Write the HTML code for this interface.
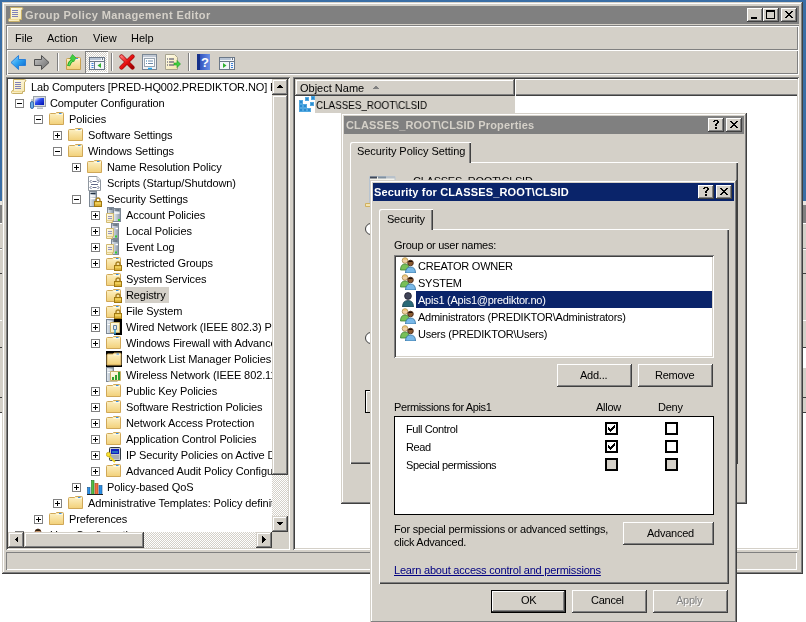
<!DOCTYPE html><html><head><meta charset="utf-8"><style>
html,body{margin:0;padding:0;width:806px;height:622px;overflow:hidden;background:#fff;}
body{position:relative;font-family:"Liberation Sans",sans-serif;font-size:11px;color:#000;}
div,svg{position:absolute;}
.t,.m,.d,.b{will-change:transform;}
.t{line-height:13px;white-space:nowrap;letter-spacing:-0.1px;}
.m{line-height:13px;white-space:nowrap;}
.d{line-height:13px;white-space:nowrap;font-size:11px;letter-spacing:-0.25px;}
.b{line-height:13px;white-space:nowrap;font-weight:bold;}
.dith{background-color:#e9e7e3;background-image:repeating-conic-gradient(#fff 0 25%, #d4d0c8 0 50%);background-size:2px 2px;}
</style></head><body>
<svg width="0" height="0" style="left:0;top:0"><defs>
<linearGradient id="gfold" x1="0" y1="0" x2="0" y2="1"><stop offset="0" stop-color="#fdf2c8"/><stop offset="1" stop-color="#f2d078"/></linearGradient>
<linearGradient id="glock" x1="0" y1="0" x2="0" y2="1"><stop offset="0" stop-color="#f8d860"/><stop offset="1" stop-color="#c08810"/></linearGradient>
<linearGradient id="gback" x1="0" y1="0" x2="1" y2="1"><stop offset="0" stop-color="#9ad8ff"/><stop offset="0.5" stop-color="#2aa0f0"/><stop offset="1" stop-color="#0a60c8"/></linearGradient>
<linearGradient id="gfwd" x1="0" y1="0" x2="1" y2="1"><stop offset="0" stop-color="#c8c8c8"/><stop offset="1" stop-color="#6a6a6a"/></linearGradient>
<linearGradient id="gscr" x1="0" y1="0" x2="1" y2="1"><stop offset="0" stop-color="#ffffff"/><stop offset="0.4" stop-color="#3050f0"/><stop offset="1" stop-color="#0010b0"/></linearGradient>
<linearGradient id="gsrv" x1="0" y1="0" x2="1" y2="0"><stop offset="0" stop-color="#e8eef4"/><stop offset="1" stop-color="#8a98a8"/></linearGradient>
<linearGradient id="gred" x1="0" y1="0" x2="1" y2="1"><stop offset="0" stop-color="#ff7070"/><stop offset="0.5" stop-color="#e81010"/><stop offset="1" stop-color="#a00000"/></linearGradient>
<linearGradient id="ghelp" x1="0" y1="0" x2="1" y2="0"><stop offset="0" stop-color="#2040b0"/><stop offset="1" stop-color="#6a90e8"/></linearGradient>
<linearGradient id="gpap" x1="0" y1="0" x2="1" y2="1"><stop offset="0" stop-color="#fffdf0"/><stop offset="1" stop-color="#f4e4a8"/></linearGradient>
</defs></svg>
<div style="left:0px;top:0px;width:806px;height:201px;background:#3a6ea5"></div>
<div style="left:0px;top:201px;width:806px;height:4px;background:#e8e6e0"></div>
<div style="left:0px;top:205px;width:806px;height:18px;background:#808080"></div>
<div style="left:0px;top:223px;width:806px;height:190px;background:#d4d0c8"></div>
<div style="left:0px;top:223px;width:806px;height:1px;background:#fff"></div>
<div style="left:0px;top:248px;width:806px;height:1px;background:#808080"></div>
<div style="left:0px;top:249px;width:806px;height:1px;background:#fff"></div>
<div style="left:0px;top:273px;width:806px;height:1px;background:#404040"></div>
<div style="left:0px;top:320px;width:806px;height:1px;background:#fff"></div>
<div style="left:0px;top:347px;width:806px;height:1px;background:#404040"></div>
<div style="left:0px;top:397px;width:806px;height:1px;background:#404040"></div>
<div style="left:0px;top:412px;width:806px;height:1px;background:#404040"></div>
<div style="left:790px;top:348px;width:16px;height:20px;background:#fff"></div>
<div style="left:2px;top:2px;width:801px;height:572px;background:#d4d0c8;box-shadow:inset -1px -1px #404040,inset 1px 1px #d4d0c8,inset -2px -2px #808080,inset 2px 2px #ffffff;"></div>
<div style="left:6px;top:6px;width:793px;height:18px;background:#808080"></div>
<svg style="left:8px;top:7px;" width="16" height="16" viewBox="0 0 16 16"><path d="M2.5 0.5H13.5Q15 0.5 15 2Q14 2.5 13.5 3V12.5H11.5V14.5H1.5Q0.5 14.5 0.5 13.5V12.5Q0.5 11.5 2.5 11.5Z" fill="url(#gpap)" stroke="#c8b068"/><path d="M4 3.5h6M4 5.5h6M4 7.5h6M4 9.5h6" stroke="#8080b8"/><path d="M1 12.5H10.5" stroke="#f0d890"/></svg>
<div class="b" style="left:25px;top:9px;color:#d4d0c8;letter-spacing:0.4px">Group Policy Management Editor</div>
<div style="left:747px;top:8px;width:16px;height:14px;background:#d4d0c8;box-shadow:inset -1px -1px #404040,inset 1px 1px #ffffff,inset -2px -2px #808080;"></div>
<div style="left:751px;top:17px;width:6px;height:2px;background:#000"></div>
<div style="left:763px;top:8px;width:16px;height:14px;background:#d4d0c8;box-shadow:inset -1px -1px #404040,inset 1px 1px #ffffff,inset -2px -2px #808080;"></div>
<div style="left:766px;top:10px;width:9px;height:9px;border:1px solid #000;border-top-width:2px;box-sizing:border-box"></div>
<div style="left:781px;top:8px;width:16px;height:14px;background:#d4d0c8;box-shadow:inset -1px -1px #404040,inset 1px 1px #ffffff,inset -2px -2px #808080;"></div>
<svg style="left:785px;top:11px;" width="8" height="7" viewBox="0 0 8 7" shape-rendering="crispEdges"><path d="M0 0h1v1h-1zM1 0h1v1h-1zM6 0h1v1h-1zM7 0h1v1h-1zM1 1h1v1h-1zM2 1h1v1h-1zM5 1h1v1h-1zM6 1h1v1h-1zM2 2h1v1h-1zM3 2h1v1h-1zM4 2h1v1h-1zM5 2h1v1h-1zM3 3h1v1h-1zM4 3h1v1h-1zM2 4h1v1h-1zM3 4h1v1h-1zM4 4h1v1h-1zM5 4h1v1h-1zM1 5h1v1h-1zM2 5h1v1h-1zM5 5h1v1h-1zM6 5h1v1h-1zM0 6h1v1h-1zM1 6h1v1h-1zM6 6h1v1h-1zM7 6h1v1h-1z" fill="#000"/></svg>
<div style="left:6px;top:25px;width:793px;height:50px;box-shadow:inset 1px 1px #808080,inset -1px -1px #fff,inset 2px 2px #fff,inset -2px -2px #808080"></div>
<div style="left:7px;top:49px;width:791px;height:1px;background:#808080"></div>
<div style="left:7px;top:50px;width:791px;height:1px;background:#fff"></div>
<div class="m" style="left:15px;top:32px;">File</div>
<div class="m" style="left:47px;top:32px;">Action</div>
<div class="m" style="left:93px;top:32px;">View</div>
<div class="m" style="left:131px;top:32px;">Help</div>
<svg style="left:10px;top:55px;" width="17" height="15" viewBox="0 0 17 15"><path d="M1 7.5L8.5 0.5V4.5H15.5V10.5H8.5V14.5Z" fill="url(#gback)" stroke="#2a80d8" stroke-linejoin="round"/></svg>
<svg style="left:33px;top:55px;" width="17" height="15" viewBox="0 0 17 15"><path d="M16 7.5L8.5 0.5V4.5H1.5V10.5H8.5V14.5Z" fill="url(#gfwd)" stroke="#505050" stroke-linejoin="round"/></svg>
<div style="left:57px;top:53px;width:1px;height:18px;background:#808080"></div>
<div style="left:58px;top:53px;width:1px;height:18px;background:#fff"></div>
<svg style="left:66px;top:54px;" width="15" height="16" viewBox="0 0 15 16"><path d="M0.5 15.5V5.5Q0.5 4.5 1.5 4.5H6.5L7.5 3.5H13.5Q14.5 3.5 14.5 4.5V15.5Z" fill="url(#gfold)" stroke="#c8a050"/><path d="M7.5 5.5H14" stroke="#fff6d0"/><path d="M10 4.5h2" stroke="#3a90e8"/><path d="M2.5 12Q3.5 8 6.5 6" fill="none" stroke="#20a020" stroke-width="3"/><path d="M2.8 11.5Q3.8 8 6.5 6.2" fill="none" stroke="#60e060" stroke-width="1.4"/><path d="M4 4.5L6.5 0.5L10 4L7.5 8Z" fill="#40d040" stroke="#20a020" stroke-width="0.6"/></svg>
<div style="left:85px;top:51px;width:23px;height:22px;box-shadow:inset 1px 1px #808080,inset -1px -1px #fff"></div>
<div style="left:86px;top:52px;width:21px;height:20px;"></div>

<div class="dith" style="left:86px;top:52px;width:21px;height:20px;background-position:1px 0"></div>
<svg style="left:89px;top:57px;" width="16" height="13" viewBox="0 0 16 13"><rect x="0.5" y="0.5" width="15" height="12" fill="#f4f6fa" stroke="#6b7888"/><path d="M1 2h11" stroke="#b8c4d4" stroke-width="2"/><path d="M13 2h1" stroke="#6b7888" stroke-width="2"/><path d="M1 4.5h14" stroke="#6b7888"/><path d="M5.5 4.5v8" stroke="#6b7888"/><path d="M2.5 6.5h2M2.5 8.5h2M2.5 10.5h2" stroke="#3a80d8"/><path d="M12 6v5l-3.5-2.5z" fill="#30b030"/></svg>
<div style="left:111px;top:53px;width:1px;height:18px;background:#808080"></div>
<div style="left:112px;top:53px;width:1px;height:18px;background:#fff"></div>
<svg style="left:119px;top:54px;" width="16" height="16" viewBox="0 0 16 16"><path d="M2.5 2.5L13.5 13.5M13.5 2.5L2.5 13.5" stroke="#a00808" stroke-width="4.2" stroke-linecap="round"/><path d="M2.5 2.5L13.5 13.5M13.5 2.5L2.5 13.5" stroke="url(#gred)" stroke-width="3" stroke-linecap="round"/></svg>
<svg style="left:142px;top:54px;" width="15" height="16" viewBox="0 0 15 16"><rect x="0.5" y="0.5" width="14" height="15" fill="#f0f2f6" stroke="#7b8794"/><path d="M1 2h13" stroke="#c0c8d4" stroke-width="2"/><rect x="2.5" y="4.5" width="10" height="8" fill="#fff" stroke="#98a4b0"/><path d="M4 7h1M6 7h5M4 9.5h1M6 9.5h5" stroke="#6a88a8"/><path d="M4.5 7h0.5" stroke="#20a0e0"/><path d="M6 14.5h4" stroke="#20a8f0" stroke-width="1.5"/></svg>
<svg style="left:165px;top:54px;" width="16" height="16" viewBox="0 0 16 16"><path d="M0.5 0.5H9.5L12.5 3.5V15.5H0.5Z" fill="url(#gpap)" stroke="#a8a490"/><path d="M2 5h1M4 5h5M2 8h1M4 8h5M2 11h1M4 11h5" stroke="#3a3a60"/><path d="M9 9h3V6.5L15.5 10L12 13.5V11H9Z" fill="#40d040" stroke="#20a020" stroke-width="0.6"/></svg>
<div style="left:188px;top:53px;width:1px;height:18px;background:#808080"></div>
<div style="left:189px;top:53px;width:1px;height:18px;background:#fff"></div>
<svg style="left:197px;top:54px;" width="13" height="16" viewBox="0 0 13 16"><rect x="0" y="0" width="13" height="16" fill="url(#ghelp)"/><rect x="0" y="0" width="3" height="16" fill="#16308a"/><text x="8" y="13" font-family="Liberation Sans" font-weight="bold" font-size="13" fill="#fff" text-anchor="middle">?</text></svg>
<svg style="left:219px;top:57px;" width="16" height="13" viewBox="0 0 16 13"><rect x="0.5" y="0.5" width="15" height="12" fill="#f4f6fa" stroke="#6b7888"/><path d="M1 2h11" stroke="#b8c4d4" stroke-width="2"/><path d="M13 2h1" stroke="#6b7888" stroke-width="2"/><path d="M1 4.5h14" stroke="#6b7888"/><path d="M10.5 4.5v8" stroke="#6b7888"/><path d="M12 6.5h2M12 8.5h2M12 10.5h2" stroke="#3a80d8"/><path d="M4 6v5l3.5-2.5z" fill="#30b030"/></svg>
<div style="left:6px;top:77px;width:284px;height:473px;background:#fff;box-shadow:inset 1px 1px #808080,inset -1px -1px #ffffff,inset 2px 2px #404040,inset -2px -2px #d4d0c8;"></div>
<div style="left:293px;top:77px;width:506px;height:473px;background:#fff;box-shadow:inset 1px 1px #808080,inset -1px -1px #ffffff,inset 2px 2px #404040,inset -2px -2px #d4d0c8;"></div>
<div style="left:6px;top:552px;width:791px;height:18px;box-shadow:inset 1px 1px #808080,inset -1px -1px #fff"></div>
<div style="left:8px;top:79px;width:264px;height:453px;overflow:hidden;background:#fff">
<svg style="left:3px;top:0px;" width="16" height="16" viewBox="0 0 16 16"><path d="M2.5 0.5H13.5Q15 0.5 15 2Q14 2.5 13.5 3V12.5H11.5V14.5H1.5Q0.5 14.5 0.5 13.5V12.5Q0.5 11.5 2.5 11.5Z" fill="url(#gpap)" stroke="#c8b068"/><path d="M4 3.5h6M4 5.5h6M4 7.5h6M4 9.5h6" stroke="#8080b8"/><path d="M1 12.5H10.5" stroke="#f0d890"/></svg>
<div class="t" style="left:23px;top:2px;">Lab Computers [PRED-HQ002.PREDIKTOR.NO] Policy</div>
<div style="left:7px;top:20px;width:9px;height:9px;border:1px solid #808080;box-sizing:border-box;background:#fff"></div>
<div style="left:9px;top:24px;width:5px;height:1px;background:#000"></div>
<svg style="left:22px;top:16px;" width="16" height="16" viewBox="0 0 16 16"><rect x="3.5" y="1.5" width="12" height="10" fill="#d8dde2" stroke="#9aa2aa"/><rect x="5" y="3" width="9" height="7" fill="url(#gscr)"/><path d="M7 12.5h6v1.5h-6z" fill="#b8bec4"/><rect x="0.5" y="6.5" width="3" height="7" rx="1.5" fill="#6aaee8" stroke="#3a6aa8"/><path d="M2 6V4" stroke="#8a9aa0"/></svg>
<div class="t" style="left:42px;top:18px;">Computer Configuration</div>
<div style="left:26px;top:36px;width:9px;height:9px;border:1px solid #808080;box-sizing:border-box;background:#fff"></div>
<div style="left:28px;top:40px;width:5px;height:1px;background:#000"></div>
<svg style="left:41px;top:32px;" width="16" height="16" viewBox="0 0 16 16"><g transform="translate(0,0)"><path d="M0.5 13.5V3.5Q0.5 2.5 1.5 2.5H6.5L7.5 1.5H13.5Q14.5 1.5 14.5 2.5V13.5Z" fill="url(#gfold)" stroke="#d0a858"/><path d="M7.5 3.5H14" stroke="#fff8dc"/><path d="M10 2.5h2.5" stroke="#3a90e8"/></g></svg>
<div class="t" style="left:61px;top:34px;">Policies</div>
<div style="left:45px;top:52px;width:9px;height:9px;border:1px solid #808080;box-sizing:border-box;background:#fff"></div>
<div style="left:47px;top:56px;width:5px;height:1px;background:#000"></div>
<div style="left:49px;top:54px;width:1px;height:5px;background:#000"></div>
<svg style="left:60px;top:48px;" width="16" height="16" viewBox="0 0 16 16"><g transform="translate(0,0)"><path d="M0.5 13.5V3.5Q0.5 2.5 1.5 2.5H6.5L7.5 1.5H13.5Q14.5 1.5 14.5 2.5V13.5Z" fill="url(#gfold)" stroke="#d0a858"/><path d="M7.5 3.5H14" stroke="#fff8dc"/><path d="M10 2.5h2.5" stroke="#3a90e8"/></g></svg>
<div class="t" style="left:80px;top:50px;">Software Settings</div>
<div style="left:45px;top:68px;width:9px;height:9px;border:1px solid #808080;box-sizing:border-box;background:#fff"></div>
<div style="left:47px;top:72px;width:5px;height:1px;background:#000"></div>
<svg style="left:60px;top:64px;" width="16" height="16" viewBox="0 0 16 16"><g transform="translate(0,0)"><path d="M0.5 13.5V3.5Q0.5 2.5 1.5 2.5H6.5L7.5 1.5H13.5Q14.5 1.5 14.5 2.5V13.5Z" fill="url(#gfold)" stroke="#d0a858"/><path d="M7.5 3.5H14" stroke="#fff8dc"/><path d="M10 2.5h2.5" stroke="#3a90e8"/></g></svg>
<div class="t" style="left:80px;top:66px;">Windows Settings</div>
<div style="left:64px;top:84px;width:9px;height:9px;border:1px solid #808080;box-sizing:border-box;background:#fff"></div>
<div style="left:66px;top:88px;width:5px;height:1px;background:#000"></div>
<div style="left:68px;top:86px;width:1px;height:5px;background:#000"></div>
<svg style="left:79px;top:80px;" width="16" height="16" viewBox="0 0 16 16"><g transform="translate(0,0)"><path d="M0.5 13.5V3.5Q0.5 2.5 1.5 2.5H6.5L7.5 1.5H13.5Q14.5 1.5 14.5 2.5V13.5Z" fill="url(#gfold)" stroke="#d0a858"/><path d="M7.5 3.5H14" stroke="#fff8dc"/><path d="M10 2.5h2.5" stroke="#3a90e8"/></g></svg>
<div class="t" style="left:99px;top:82px;">Name Resolution Policy</div>
<svg style="left:79px;top:96px;" width="16" height="16" viewBox="0 0 16 16"><path d="M1.5 1.5H10L13.5 5V15.5H1.5Z" fill="#fff" stroke="#9098a0"/><path d="M10 1.5V5H13.5" fill="#eceef0" stroke="#b0b6bc"/><path d="M4.5 5L3 6.5L4.5 8M10.5 5L12 6.5L10.5 8M5.5 6.5h4M4 9.5h7M4.5 11L3 12.5L4.5 14M10.5 11L12 12.5L10.5 14M5.5 12.5h4" fill="none" stroke="#606888" stroke-width="1"/></svg>
<div class="t" style="left:99px;top:98px;">Scripts (Startup/Shutdown)</div>
<div style="left:64px;top:116px;width:9px;height:9px;border:1px solid #808080;box-sizing:border-box;background:#fff"></div>
<div style="left:66px;top:120px;width:5px;height:1px;background:#000"></div>
<svg style="left:79px;top:112px;" width="16" height="16" viewBox="0 0 16 16"><rect x="2.5" y="0.5" width="7" height="15" fill="url(#gsrv)" stroke="#7d8894"/><path d="M3.5 2.5h5" stroke="#203040" stroke-width="1.2"/><path d="M3.5 5h5M3.5 7.5h5" stroke="#fff" stroke-width="1.5"/><g transform="translate(7,6)"><path d="M2 4.5V3a2 2 0 0 1 4 0v1.5" fill="none" stroke="#a88020" stroke-width="1.4"/><rect x="0.5" y="4.5" width="7" height="5" fill="url(#glock)" stroke="#a07810"/><path d="M1 6.5h6M1 8h6" stroke="#f8e070" stroke-width="0.6"/></g></svg>
<div class="t" style="left:99px;top:114px;">Security Settings</div>
<div style="left:83px;top:132px;width:9px;height:9px;border:1px solid #808080;box-sizing:border-box;background:#fff"></div>
<div style="left:85px;top:136px;width:5px;height:1px;background:#000"></div>
<div style="left:87px;top:134px;width:1px;height:5px;background:#000"></div>
<svg style="left:98px;top:128px;" width="16" height="16" viewBox="0 0 16 16"><rect x="1.5" y="0.5" width="6" height="10" fill="url(#gsrv)" stroke="#7d8894"/><rect x="7.5" y="1.5" width="7" height="13" fill="url(#gsrv)" stroke="#7d8894"/><path d="M2.5 2h4M8.5 3h5" stroke="#304050"/><path d="M8.5 6h5" stroke="#fff" stroke-width="1.5"/><rect x="12" y="12" width="2" height="2" fill="#30d030"/><path d="M0.5 6.5H7.5V13.5H6.5V15.5H0.5Z" fill="url(#gpap)" stroke="#d0b870"/><path d="M2 9.5h4M2 11.5h4" stroke="#8a8ac0" stroke-width="0.9"/><path d="M0.5 13.5H6.5" stroke="#e0c880" stroke-width="0.8"/></svg>
<div class="t" style="left:118px;top:130px;">Account Policies</div>
<div style="left:83px;top:148px;width:9px;height:9px;border:1px solid #808080;box-sizing:border-box;background:#fff"></div>
<div style="left:85px;top:152px;width:5px;height:1px;background:#000"></div>
<div style="left:87px;top:150px;width:1px;height:5px;background:#000"></div>
<svg style="left:98px;top:144px;" width="16" height="16" viewBox="0 0 16 16"><rect x="5.5" y="0.5" width="7" height="15" fill="url(#gsrv)" stroke="#7d8894"/><path d="M6.5 2h5" stroke="#304050"/><path d="M9.5 5.5h2.5" stroke="#fff" stroke-width="1.5"/><rect x="9" y="12.5" width="2" height="2" fill="#30d030"/><path d="M0.5 5.5H7.5V13.5H6.5V15.5H0.5Z" fill="url(#gpap)" stroke="#d0b870"/><path d="M2 8.5h4M2 10.5h4" stroke="#8a8ac0" stroke-width="0.9"/><path d="M0.5 13.5H6.5" stroke="#e0c880" stroke-width="0.8"/></svg>
<div class="t" style="left:118px;top:146px;">Local Policies</div>
<div style="left:83px;top:164px;width:9px;height:9px;border:1px solid #808080;box-sizing:border-box;background:#fff"></div>
<div style="left:85px;top:168px;width:5px;height:1px;background:#000"></div>
<div style="left:87px;top:166px;width:1px;height:5px;background:#000"></div>
<svg style="left:98px;top:160px;" width="16" height="16" viewBox="0 0 16 16"><rect x="5.5" y="0.5" width="7" height="15" fill="url(#gsrv)" stroke="#7d8894"/><path d="M6.5 2h5" stroke="#304050"/><path d="M9.5 5.5h2.5" stroke="#fff" stroke-width="1.5"/><rect x="9" y="12.5" width="2" height="2" fill="#30d030"/><path d="M0.5 5.5H7.5V13.5H6.5V15.5H0.5Z" fill="url(#gpap)" stroke="#d0b870"/><path d="M2 8.5h4M2 10.5h4" stroke="#8a8ac0" stroke-width="0.9"/><path d="M0.5 13.5H6.5" stroke="#e0c880" stroke-width="0.8"/></svg>
<div class="t" style="left:118px;top:162px;">Event Log</div>
<div style="left:83px;top:180px;width:9px;height:9px;border:1px solid #808080;box-sizing:border-box;background:#fff"></div>
<div style="left:85px;top:184px;width:5px;height:1px;background:#000"></div>
<div style="left:87px;top:182px;width:1px;height:5px;background:#000"></div>
<svg style="left:98px;top:176px;" width="16" height="16" viewBox="0 0 16 16"><g transform="translate(0,1)"><path d="M0.5 13.5V3.5Q0.5 2.5 1.5 2.5H6.5L7.5 1.5H13.5Q14.5 1.5 14.5 2.5V13.5Z" fill="url(#gfold)" stroke="#d0a858"/><path d="M7.5 3.5H14" stroke="#fff8dc"/><path d="M10 2.5h2.5" stroke="#3a90e8"/></g><g transform="translate(8,6)"><path d="M2 4.5V3a2 2 0 0 1 4 0v1.5" fill="none" stroke="#a88020" stroke-width="1.4"/><rect x="0.5" y="4.5" width="7" height="5" fill="url(#glock)" stroke="#a07810"/><path d="M1 6.5h6M1 8h6" stroke="#f8e070" stroke-width="0.6"/></g></svg>
<div class="t" style="left:118px;top:178px;">Restricted Groups</div>
<svg style="left:98px;top:192px;" width="16" height="16" viewBox="0 0 16 16"><g transform="translate(0,1)"><path d="M0.5 13.5V3.5Q0.5 2.5 1.5 2.5H6.5L7.5 1.5H13.5Q14.5 1.5 14.5 2.5V13.5Z" fill="url(#gfold)" stroke="#d0a858"/><path d="M7.5 3.5H14" stroke="#fff8dc"/><path d="M10 2.5h2.5" stroke="#3a90e8"/></g><g transform="translate(8,6)"><path d="M2 4.5V3a2 2 0 0 1 4 0v1.5" fill="none" stroke="#a88020" stroke-width="1.4"/><rect x="0.5" y="4.5" width="7" height="5" fill="url(#glock)" stroke="#a07810"/><path d="M1 6.5h6M1 8h6" stroke="#f8e070" stroke-width="0.6"/></g></svg>
<div class="t" style="left:118px;top:194px;">System Services</div>
<div style="left:117px;top:208px;width:44px;height:16px;background:#d4d0c8"></div>
<svg style="left:98px;top:208px;" width="16" height="16" viewBox="0 0 16 16"><g transform="translate(0,1)"><path d="M0.5 13.5V3.5Q0.5 2.5 1.5 2.5H6.5L7.5 1.5H13.5Q14.5 1.5 14.5 2.5V13.5Z" fill="url(#gfold)" stroke="#d0a858"/><path d="M7.5 3.5H14" stroke="#fff8dc"/><path d="M10 2.5h2.5" stroke="#3a90e8"/></g><g transform="translate(8,6)"><path d="M2 4.5V3a2 2 0 0 1 4 0v1.5" fill="none" stroke="#a88020" stroke-width="1.4"/><rect x="0.5" y="4.5" width="7" height="5" fill="url(#glock)" stroke="#a07810"/><path d="M1 6.5h6M1 8h6" stroke="#f8e070" stroke-width="0.6"/></g></svg>
<div class="t" style="left:118px;top:210px;">Registry</div>
<div style="left:83px;top:228px;width:9px;height:9px;border:1px solid #808080;box-sizing:border-box;background:#fff"></div>
<div style="left:85px;top:232px;width:5px;height:1px;background:#000"></div>
<div style="left:87px;top:230px;width:1px;height:5px;background:#000"></div>
<svg style="left:98px;top:224px;" width="16" height="16" viewBox="0 0 16 16"><g transform="translate(0,1)"><path d="M0.5 13.5V3.5Q0.5 2.5 1.5 2.5H6.5L7.5 1.5H13.5Q14.5 1.5 14.5 2.5V13.5Z" fill="url(#gfold)" stroke="#d0a858"/><path d="M7.5 3.5H14" stroke="#fff8dc"/><path d="M10 2.5h2.5" stroke="#3a90e8"/></g><g transform="translate(8,6)"><path d="M2 4.5V3a2 2 0 0 1 4 0v1.5" fill="none" stroke="#a88020" stroke-width="1.4"/><rect x="0.5" y="4.5" width="7" height="5" fill="url(#glock)" stroke="#a07810"/><path d="M1 6.5h6M1 8h6" stroke="#f8e070" stroke-width="0.6"/></g></svg>
<div class="t" style="left:118px;top:226px;">File System</div>
<div style="left:83px;top:244px;width:9px;height:9px;border:1px solid #808080;box-sizing:border-box;background:#fff"></div>
<div style="left:85px;top:248px;width:5px;height:1px;background:#000"></div>
<div style="left:87px;top:246px;width:1px;height:5px;background:#000"></div>
<svg style="left:98px;top:240px;" width="16" height="16" viewBox="0 0 16 16"><path d="M8 0h8v16h-8z" fill="#000"/><rect x="0.5" y="0.5" width="7" height="14" fill="url(#gsrv)" stroke="#7d8894"/><path d="M1.5 3h5M1.5 5.5h5" stroke="#fff" stroke-width="1.2"/><path d="M4.5 3.5H13.5V13.5H4.5Z" fill="url(#gpap)" stroke="#c8b068"/><path d="M7.5 6.5h3v4h-3z" fill="#e0e8f0" stroke="#6080a0"/><path d="M9 10.5v5" stroke="#30a0e0" stroke-width="1.5"/></svg>
<div class="t" style="left:118px;top:242px;">Wired Network (IEEE 802.3) Policies</div>
<div style="left:83px;top:260px;width:9px;height:9px;border:1px solid #808080;box-sizing:border-box;background:#fff"></div>
<div style="left:85px;top:264px;width:5px;height:1px;background:#000"></div>
<div style="left:87px;top:262px;width:1px;height:5px;background:#000"></div>
<svg style="left:98px;top:256px;" width="16" height="16" viewBox="0 0 16 16"><g transform="translate(0,0)"><path d="M0.5 13.5V3.5Q0.5 2.5 1.5 2.5H6.5L7.5 1.5H13.5Q14.5 1.5 14.5 2.5V13.5Z" fill="url(#gfold)" stroke="#d0a858"/><path d="M7.5 3.5H14" stroke="#fff8dc"/><path d="M10 2.5h2.5" stroke="#3a90e8"/></g></svg>
<div class="t" style="left:118px;top:258px;">Windows Firewall with Advanced Security</div>
<svg style="left:98px;top:272px;" width="16" height="16" viewBox="0 0 16 16"><rect x="0" y="0" width="16" height="16" fill="#000"/><g transform="translate(0.5,0.5)"><path d="M0.5 13.5V3.5Q0.5 2.5 1.5 2.5H6.5L7.5 1.5H13.5Q14.5 1.5 14.5 2.5V13.5Z" fill="url(#gfold)" stroke="#d0a858"/><path d="M7.5 3.5H14" stroke="#fff8dc"/><path d="M10 2.5h2.5" stroke="#3a90e8"/></g></svg>
<div class="t" style="left:118px;top:274px;">Network List Manager Policies</div>
<svg style="left:98px;top:288px;" width="16" height="16" viewBox="0 0 16 16"><rect x="0.5" y="0.5" width="7" height="14" fill="url(#gsrv)" stroke="#7d8894"/><path d="M1.5 3h5M1.5 5.5h5" stroke="#fff" stroke-width="1.2"/><path d="M4.5 4.5H14.5V13.5H4.5Z" fill="url(#gpap)" stroke="#c8b068"/><path d="M6 13h2v-3h-2zM9 13h2v-5h-2zM12 13h2v-8h-2z" fill="#30a030"/><path d="M2.5 14.5H11.5" stroke="#c8c0a0"/></svg>
<div class="t" style="left:118px;top:290px;">Wireless Network (IEEE 802.11) Policies</div>
<div style="left:83px;top:308px;width:9px;height:9px;border:1px solid #808080;box-sizing:border-box;background:#fff"></div>
<div style="left:85px;top:312px;width:5px;height:1px;background:#000"></div>
<div style="left:87px;top:310px;width:1px;height:5px;background:#000"></div>
<svg style="left:98px;top:304px;" width="16" height="16" viewBox="0 0 16 16"><g transform="translate(0,0)"><path d="M0.5 13.5V3.5Q0.5 2.5 1.5 2.5H6.5L7.5 1.5H13.5Q14.5 1.5 14.5 2.5V13.5Z" fill="url(#gfold)" stroke="#d0a858"/><path d="M7.5 3.5H14" stroke="#fff8dc"/><path d="M10 2.5h2.5" stroke="#3a90e8"/></g></svg>
<div class="t" style="left:118px;top:306px;">Public Key Policies</div>
<div style="left:83px;top:324px;width:9px;height:9px;border:1px solid #808080;box-sizing:border-box;background:#fff"></div>
<div style="left:85px;top:328px;width:5px;height:1px;background:#000"></div>
<div style="left:87px;top:326px;width:1px;height:5px;background:#000"></div>
<svg style="left:98px;top:320px;" width="16" height="16" viewBox="0 0 16 16"><g transform="translate(0,0)"><path d="M0.5 13.5V3.5Q0.5 2.5 1.5 2.5H6.5L7.5 1.5H13.5Q14.5 1.5 14.5 2.5V13.5Z" fill="url(#gfold)" stroke="#d0a858"/><path d="M7.5 3.5H14" stroke="#fff8dc"/><path d="M10 2.5h2.5" stroke="#3a90e8"/></g></svg>
<div class="t" style="left:118px;top:322px;">Software Restriction Policies</div>
<div style="left:83px;top:340px;width:9px;height:9px;border:1px solid #808080;box-sizing:border-box;background:#fff"></div>
<div style="left:85px;top:344px;width:5px;height:1px;background:#000"></div>
<div style="left:87px;top:342px;width:1px;height:5px;background:#000"></div>
<svg style="left:98px;top:336px;" width="16" height="16" viewBox="0 0 16 16"><g transform="translate(0,0)"><path d="M0.5 13.5V3.5Q0.5 2.5 1.5 2.5H6.5L7.5 1.5H13.5Q14.5 1.5 14.5 2.5V13.5Z" fill="url(#gfold)" stroke="#d0a858"/><path d="M7.5 3.5H14" stroke="#fff8dc"/><path d="M10 2.5h2.5" stroke="#3a90e8"/></g></svg>
<div class="t" style="left:118px;top:338px;">Network Access Protection</div>
<div style="left:83px;top:356px;width:9px;height:9px;border:1px solid #808080;box-sizing:border-box;background:#fff"></div>
<div style="left:85px;top:360px;width:5px;height:1px;background:#000"></div>
<div style="left:87px;top:358px;width:1px;height:5px;background:#000"></div>
<svg style="left:98px;top:352px;" width="16" height="16" viewBox="0 0 16 16"><g transform="translate(0,0)"><path d="M0.5 13.5V3.5Q0.5 2.5 1.5 2.5H6.5L7.5 1.5H13.5Q14.5 1.5 14.5 2.5V13.5Z" fill="url(#gfold)" stroke="#d0a858"/><path d="M7.5 3.5H14" stroke="#fff8dc"/><path d="M10 2.5h2.5" stroke="#3a90e8"/></g></svg>
<div class="t" style="left:118px;top:354px;">Application Control Policies</div>
<div style="left:83px;top:372px;width:9px;height:9px;border:1px solid #808080;box-sizing:border-box;background:#fff"></div>
<div style="left:85px;top:376px;width:5px;height:1px;background:#000"></div>
<div style="left:87px;top:374px;width:1px;height:5px;background:#000"></div>
<svg style="left:98px;top:368px;" width="16" height="16" viewBox="0 0 16 16"><rect x="3.5" y="0.5" width="11" height="13" rx="1" fill="#c8ccd0" stroke="#303840"/><rect x="5" y="2" width="8" height="5" fill="#1020c0"/><path d="M6 5h6" stroke="#40c0c0"/><path d="M5 9h8M5 11h8" stroke="#8a9098"/><path d="M2 8l7 7" stroke="#f0d820" stroke-width="2"/><circle cx="2.5" cy="7.5" r="2.2" fill="#f8e030" stroke="#b09010" stroke-width="0.6"/></svg>
<div class="t" style="left:118px;top:370px;">IP Security Policies on Active Directory</div>
<div style="left:83px;top:388px;width:9px;height:9px;border:1px solid #808080;box-sizing:border-box;background:#fff"></div>
<div style="left:85px;top:392px;width:5px;height:1px;background:#000"></div>
<div style="left:87px;top:390px;width:1px;height:5px;background:#000"></div>
<svg style="left:98px;top:384px;" width="16" height="16" viewBox="0 0 16 16"><g transform="translate(0,0)"><path d="M0.5 13.5V3.5Q0.5 2.5 1.5 2.5H6.5L7.5 1.5H13.5Q14.5 1.5 14.5 2.5V13.5Z" fill="url(#gfold)" stroke="#d0a858"/><path d="M7.5 3.5H14" stroke="#fff8dc"/><path d="M10 2.5h2.5" stroke="#3a90e8"/></g></svg>
<div class="t" style="left:118px;top:386px;">Advanced Audit Policy Configuration</div>
<div style="left:64px;top:404px;width:9px;height:9px;border:1px solid #808080;box-sizing:border-box;background:#fff"></div>
<div style="left:66px;top:408px;width:5px;height:1px;background:#000"></div>
<div style="left:68px;top:406px;width:1px;height:5px;background:#000"></div>
<svg style="left:79px;top:400px;" width="16" height="16" viewBox="0 0 16 16"><rect x="0.5" y="8.5" width="2.5" height="7" fill="#2a90e8" stroke="#14508a" stroke-width="0.6"/><rect x="4.5" y="1.5" width="2.5" height="14" fill="#50c040" stroke="#207020" stroke-width="0.6"/><rect x="8" y="4.5" width="3" height="11" fill="#f07040" stroke="#a04010" stroke-width="0.6"/><rect x="12" y="6.5" width="3" height="9" fill="#2a90e8" stroke="#14508a" stroke-width="0.6"/><path d="M0 15.5h16" stroke="#202020"/></svg>
<div class="t" style="left:99px;top:402px;">Policy-based QoS</div>
<div style="left:45px;top:420px;width:9px;height:9px;border:1px solid #808080;box-sizing:border-box;background:#fff"></div>
<div style="left:47px;top:424px;width:5px;height:1px;background:#000"></div>
<div style="left:49px;top:422px;width:1px;height:5px;background:#000"></div>
<svg style="left:60px;top:416px;" width="16" height="16" viewBox="0 0 16 16"><g transform="translate(0,0)"><path d="M0.5 13.5V3.5Q0.5 2.5 1.5 2.5H6.5L7.5 1.5H13.5Q14.5 1.5 14.5 2.5V13.5Z" fill="url(#gfold)" stroke="#d0a858"/><path d="M7.5 3.5H14" stroke="#fff8dc"/><path d="M10 2.5h2.5" stroke="#3a90e8"/></g></svg>
<div class="t" style="left:80px;top:418px;">Administrative Templates: Policy definitions</div>
<div style="left:26px;top:436px;width:9px;height:9px;border:1px solid #808080;box-sizing:border-box;background:#fff"></div>
<div style="left:28px;top:440px;width:5px;height:1px;background:#000"></div>
<div style="left:30px;top:438px;width:1px;height:5px;background:#000"></div>
<svg style="left:41px;top:432px;" width="16" height="16" viewBox="0 0 16 16"><g transform="translate(0,0)"><path d="M0.5 13.5V3.5Q0.5 2.5 1.5 2.5H6.5L7.5 1.5H13.5Q14.5 1.5 14.5 2.5V13.5Z" fill="url(#gfold)" stroke="#d0a858"/><path d="M7.5 3.5H14" stroke="#fff8dc"/><path d="M10 2.5h2.5" stroke="#3a90e8"/></g></svg>
<div class="t" style="left:61px;top:434px;">Preferences</div>
<div style="left:7px;top:452px;width:9px;height:9px;border:1px solid #808080;box-sizing:border-box;background:#fff"></div>
<div style="left:9px;top:456px;width:5px;height:1px;background:#000"></div>
<svg style="left:22px;top:448px;" width="16" height="16" viewBox="0 0 16 16"><circle cx="8" cy="5" r="3" fill="#c89870" stroke="#704830" stroke-width="0.8"/><path d="M5 4q3-4 6 0" fill="#302010"/><path d="M2.5 16q0-6 5.5-6t5.5 6z" fill="#5a7090" stroke="#304060" stroke-width="0.8"/></svg>
<div class="t" style="left:42px;top:450px;">User Configuration</div>
</div>
<div class="dith" style="left:272px;top:79px;width:16px;height:453px"></div>
<div style="left:272px;top:79px;width:16px;height:16px;background:#d4d0c8;box-shadow:inset -1px -1px #404040,inset 1px 1px #d4d0c8,inset -2px -2px #808080,inset 2px 2px #ffffff;"></div>
<svg style="left:276px;top:84px;" width="7" height="4" viewBox="0 0 7 4" shape-rendering="crispEdges"><path d="M0 4h7l-3.5-3.5z" fill="#000"/></svg>
<div style="left:272px;top:95px;width:16px;height:380px;background:#d4d0c8;box-shadow:inset -1px -1px #404040,inset 1px 1px #d4d0c8,inset -2px -2px #808080,inset 2px 2px #ffffff;"></div>
<div style="left:272px;top:516px;width:16px;height:16px;background:#d4d0c8;box-shadow:inset -1px -1px #404040,inset 1px 1px #d4d0c8,inset -2px -2px #808080,inset 2px 2px #ffffff;"></div>
<svg style="left:276px;top:522px;" width="7" height="4" viewBox="0 0 7 4" shape-rendering="crispEdges"><path d="M0 0h7l-3.5 3.5z" fill="#000"/></svg>
<div class="dith" style="left:8px;top:532px;width:264px;height:16px;background-position:1px 0"></div>
<div style="left:8px;top:532px;width:16px;height:16px;background:#d4d0c8;box-shadow:inset -1px -1px #404040,inset 1px 1px #d4d0c8,inset -2px -2px #808080,inset 2px 2px #ffffff;"></div>
<svg style="left:14px;top:536px;" width="4" height="7" viewBox="0 0 4 7" shape-rendering="crispEdges"><path d="M4 0v7l-3.5-3.5z" fill="#000"/></svg>
<div style="left:24px;top:532px;width:120px;height:16px;background:#d4d0c8;box-shadow:inset -1px -1px #404040,inset 1px 1px #d4d0c8,inset -2px -2px #808080,inset 2px 2px #ffffff;"></div>
<div style="left:256px;top:532px;width:16px;height:16px;background:#d4d0c8;box-shadow:inset -1px -1px #404040,inset 1px 1px #d4d0c8,inset -2px -2px #808080,inset 2px 2px #ffffff;"></div>
<svg style="left:262px;top:536px;" width="4" height="7" viewBox="0 0 4 7" shape-rendering="crispEdges"><path d="M0 0v7l3.5-3.5z" fill="#000"/></svg>
<div style="left:272px;top:532px;width:16px;height:16px;background:#d4d0c8"></div>
<div style="left:295px;top:79px;width:220px;height:17px;background:#d4d0c8;box-shadow:inset -1px -1px #404040,inset 1px 1px #d4d0c8,inset -2px -2px #808080,inset 2px 2px #ffffff;"></div>
<div class="m" style="left:300px;top:82px;">Object Name</div>
<svg style="left:372px;top:85px;" width="8" height="4" viewBox="0 0 8 4" shape-rendering="crispEdges"><path d="M0 4h7l-3.5-3.5z" fill="#808080"/></svg>
<div style="left:515px;top:79px;width:282px;height:17px;background:#d4d0c8;box-shadow:inset 1px 1px #fff,inset 0 -1px #404040,inset 0 -2px #808080"></div>
<div style="left:315px;top:96px;width:200px;height:17px;background:#d4d0c8"></div>
<svg style="left:299px;top:96px;" width="16" height="16" viewBox="0 0 16 16" shape-rendering="crispEdges"><rect x="0" y="4" width="4" height="4" fill="#2a8cd0"/><rect x="0.5" y="4.5" width="3" height="3" fill="none" stroke="#52a8e0" stroke-width="1"/><rect x="0" y="8" width="4" height="4" fill="#2a8cd0"/><rect x="0.5" y="8.5" width="3" height="3" fill="none" stroke="#52a8e0" stroke-width="1"/><rect x="0" y="12" width="4" height="4" fill="#2a8cd0"/><rect x="0.5" y="12.5" width="3" height="3" fill="none" stroke="#52a8e0" stroke-width="1"/><rect x="4" y="8" width="4" height="4" fill="#2a8cd0"/><rect x="4.5" y="8.5" width="3" height="3" fill="none" stroke="#52a8e0" stroke-width="1"/><rect x="4" y="12" width="4" height="4" fill="#2a8cd0"/><rect x="4.5" y="12.5" width="3" height="3" fill="none" stroke="#52a8e0" stroke-width="1"/><rect x="8" y="12" width="4" height="4" fill="#2a8cd0"/><rect x="8.5" y="12.5" width="3" height="3" fill="none" stroke="#52a8e0" stroke-width="1"/><rect x="6" y="1" width="4" height="4" fill="#2a8cd0"/><rect x="6.5" y="1.5" width="3" height="3" fill="none" stroke="#52a8e0" stroke-width="1"/><rect x="12" y="0" width="4" height="4" fill="#2a8cd0"/><rect x="12.5" y="0.5" width="3" height="3" fill="none" stroke="#52a8e0" stroke-width="1"/><rect x="11" y="6" width="4" height="4" fill="#2a8cd0"/><rect x="11.5" y="6.5" width="3" height="3" fill="none" stroke="#52a8e0" stroke-width="1"/></svg>
<div class="m" style="left:316px;top:99px;transform:scaleX(0.895);transform-origin:0 0">CLASSES_ROOT\CLSID</div>
<div style="left:341px;top:113px;width:406px;height:391px;background:#d4d0c8;box-shadow:inset -1px -1px #404040,inset 1px 1px #d4d0c8,inset -2px -2px #808080,inset 2px 2px #ffffff;"></div>
<div style="left:344px;top:116px;width:400px;height:18px;background:#808080"></div>
<div class="b" style="left:346px;top:119px;color:#d4d0c8;letter-spacing:0.17px">CLASSES_ROOT\CLSID Properties</div>
<div style="left:708px;top:118px;width:16px;height:14px;background:#d4d0c8;box-shadow:inset -1px -1px #404040,inset 1px 1px #ffffff,inset -2px -2px #808080;"></div>
<svg style="left:713px;top:120px;" width="6" height="9" viewBox="0 0 6 9" shape-rendering="crispEdges"><path d="M1 0h1v1h-1zM2 0h1v1h-1zM3 0h1v1h-1zM4 0h1v1h-1zM0 1h1v1h-1zM1 1h1v1h-1zM4 1h1v1h-1zM5 1h1v1h-1zM4 2h1v1h-1zM5 2h1v1h-1zM3 3h1v1h-1zM4 3h1v1h-1zM2 4h1v1h-1zM3 4h1v1h-1zM2 5h1v1h-1zM3 5h1v1h-1zM2 7h1v1h-1zM3 7h1v1h-1zM2 8h1v1h-1zM3 8h1v1h-1z" fill="#000"/></svg>
<div style="left:726px;top:118px;width:16px;height:14px;background:#d4d0c8;box-shadow:inset -1px -1px #404040,inset 1px 1px #ffffff,inset -2px -2px #808080;"></div>
<svg style="left:730px;top:121px;" width="8" height="7" viewBox="0 0 8 7" shape-rendering="crispEdges"><path d="M0 0h1v1h-1zM1 0h1v1h-1zM6 0h1v1h-1zM7 0h1v1h-1zM1 1h1v1h-1zM2 1h1v1h-1zM5 1h1v1h-1zM6 1h1v1h-1zM2 2h1v1h-1zM3 2h1v1h-1zM4 2h1v1h-1zM5 2h1v1h-1zM3 3h1v1h-1zM4 3h1v1h-1zM2 4h1v1h-1zM3 4h1v1h-1zM4 4h1v1h-1zM5 4h1v1h-1zM1 5h1v1h-1zM2 5h1v1h-1zM5 5h1v1h-1zM6 5h1v1h-1zM0 6h1v1h-1zM1 6h1v1h-1zM6 6h1v1h-1zM7 6h1v1h-1z" fill="#000"/></svg>
<div style="left:350px;top:162px;width:388px;height:302px;box-shadow:inset 1px 1px #fff,inset -1px -1px #404040,inset -2px -2px #808080"></div>
<div style="left:350px;top:142px;width:121px;height:21px;background:#d4d0c8;box-shadow:inset 1px 1px #fff,inset -1px 0 #404040,inset -2px 0 #808080;border-top-left-radius:2px"></div>
<div class="d" style="left:357px;top:145px;letter-spacing:-0.05px">Security Policy Setting</div>
<svg style="left:364px;top:175px;" width="32" height="32" viewBox="0 0 32 32"><path d="M5.5 1.5H31V29.5H5.5Z" fill="#f4f2ea" stroke="#b8c4d0"/><path d="M6 2.5h7" stroke="#404858" stroke-width="2"/><path d="M14 2.5h8" stroke="#8090a0" stroke-width="2"/><path d="M22 2.5h9" stroke="#b8c0c8" stroke-width="2"/><path d="M1.5 28.5H8V31.5H1.5Z" fill="#f4e4b0" stroke="#d0b060"/></svg>
<div class="d" style="left:413px;top:175px;">CLASSES_ROOT\CLSID</div>
<svg style="left:365px;top:223px;" width="12" height="12" viewBox="0 0 12 12"><circle cx="6" cy="6" r="5.5" fill="#fff" stroke="#404040"/></svg>
<svg style="left:365px;top:332px;" width="12" height="12" viewBox="0 0 12 12"><circle cx="6" cy="6" r="5.5" fill="#fff" stroke="#404040"/></svg>
<div style="left:365px;top:390px;width:75px;height:23px;border:1px solid #000;box-sizing:border-box;box-shadow:inset 1px 1px #fff"></div>
<div style="left:370px;top:180px;width:367px;height:443px;background:#d4d0c8;box-shadow:inset -1px -1px #404040,inset 1px 1px #d4d0c8,inset -2px -2px #808080,inset 2px 2px #ffffff;"></div>
<div style="left:373px;top:183px;width:361px;height:18px;background:#0a246a"></div>
<div class="b" style="left:374px;top:186px;color:#fff;letter-spacing:0.15px">Security for CLASSES_ROOT\CLSID</div>
<div style="left:698px;top:185px;width:16px;height:14px;background:#d4d0c8;box-shadow:inset -1px -1px #404040,inset 1px 1px #ffffff,inset -2px -2px #808080;"></div>
<svg style="left:703px;top:187px;" width="6" height="9" viewBox="0 0 6 9" shape-rendering="crispEdges"><path d="M1 0h1v1h-1zM2 0h1v1h-1zM3 0h1v1h-1zM4 0h1v1h-1zM0 1h1v1h-1zM1 1h1v1h-1zM4 1h1v1h-1zM5 1h1v1h-1zM4 2h1v1h-1zM5 2h1v1h-1zM3 3h1v1h-1zM4 3h1v1h-1zM2 4h1v1h-1zM3 4h1v1h-1zM2 5h1v1h-1zM3 5h1v1h-1zM2 7h1v1h-1zM3 7h1v1h-1zM2 8h1v1h-1zM3 8h1v1h-1z" fill="#000"/></svg>
<div style="left:716px;top:185px;width:16px;height:14px;background:#d4d0c8;box-shadow:inset -1px -1px #404040,inset 1px 1px #ffffff,inset -2px -2px #808080;"></div>
<svg style="left:720px;top:188px;" width="8" height="7" viewBox="0 0 8 7" shape-rendering="crispEdges"><path d="M0 0h1v1h-1zM1 0h1v1h-1zM6 0h1v1h-1zM7 0h1v1h-1zM1 1h1v1h-1zM2 1h1v1h-1zM5 1h1v1h-1zM6 1h1v1h-1zM2 2h1v1h-1zM3 2h1v1h-1zM4 2h1v1h-1zM5 2h1v1h-1zM3 3h1v1h-1zM4 3h1v1h-1zM2 4h1v1h-1zM3 4h1v1h-1zM4 4h1v1h-1zM5 4h1v1h-1zM1 5h1v1h-1zM2 5h1v1h-1zM5 5h1v1h-1zM6 5h1v1h-1zM0 6h1v1h-1zM1 6h1v1h-1zM6 6h1v1h-1zM7 6h1v1h-1z" fill="#000"/></svg>
<div style="left:379px;top:229px;width:350px;height:355px;box-shadow:inset 1px 1px #fff,inset -1px -1px #404040,inset -2px -2px #808080"></div>
<div style="left:379px;top:209px;width:54px;height:21px;background:#d4d0c8;box-shadow:inset 1px 1px #fff,inset -1px 0 #404040,inset -2px 0 #808080;border-top-left-radius:2px"></div>
<div class="d" style="left:387px;top:213px;">Security</div>
<div class="d" style="left:394px;top:239px;">Group or user names:</div>
<div style="left:394px;top:255px;width:320px;height:103px;background:#fff;box-shadow:inset 1px 1px #808080,inset -1px -1px #ffffff,inset 2px 2px #404040,inset -2px -2px #d4d0c8;"></div>
<svg style="left:400px;top:257px;" width="16" height="16" viewBox="0 0 16 16"><circle cx="5" cy="3.5" r="2.8" fill="#f0d0a8" stroke="#a88848" stroke-width="0.8"/><path d="M2.5 2.5q2.5-3 5 0" fill="#e8c060"/><path d="M0.5 13q0-6 4.5-6t4.5 6z" fill="#78c058" stroke="#3a8030" stroke-width="0.8"/><circle cx="10.5" cy="6" r="2.8" fill="#8a5a30" stroke="#402010" stroke-width="0.8"/><path d="M8 5q2.5-3 5 0" fill="#201008"/><path d="M5.5 16q0-6 5-6t5 6z" fill="#78b8e8" stroke="#3070a0" stroke-width="0.8"/></svg>
<div class="d" style="left:418px;top:260px;">CREATOR OWNER</div>
<svg style="left:400px;top:274px;" width="16" height="16" viewBox="0 0 16 16"><circle cx="5" cy="3.5" r="2.8" fill="#f0d0a8" stroke="#a88848" stroke-width="0.8"/><path d="M2.5 2.5q2.5-3 5 0" fill="#e8c060"/><path d="M0.5 13q0-6 4.5-6t4.5 6z" fill="#78c058" stroke="#3a8030" stroke-width="0.8"/><circle cx="10.5" cy="6" r="2.8" fill="#8a5a30" stroke="#402010" stroke-width="0.8"/><path d="M8 5q2.5-3 5 0" fill="#201008"/><path d="M5.5 16q0-6 5-6t5 6z" fill="#78b8e8" stroke="#3070a0" stroke-width="0.8"/></svg>
<div class="d" style="left:418px;top:277px;">SYSTEM</div>
<div style="left:416px;top:291px;width:296px;height:17px;background:#0a246a"></div>
<svg style="left:400px;top:291px;" width="16" height="16" viewBox="0 0 16 16"><circle cx="8" cy="5" r="3.4" fill="#404458" stroke="#202030" stroke-width="0.8"/><path d="M2.5 16q0-6.5 5.5-6.5t5.5 6.5z" fill="#2a6a78" stroke="#1a4050" stroke-width="0.8"/></svg>
<div class="d" style="left:418px;top:294px;color:#fff">Apis1 (Apis1@prediktor.no)</div>
<svg style="left:400px;top:308px;" width="16" height="16" viewBox="0 0 16 16"><circle cx="5" cy="3.5" r="2.8" fill="#f0d0a8" stroke="#a88848" stroke-width="0.8"/><path d="M2.5 2.5q2.5-3 5 0" fill="#e8c060"/><path d="M0.5 13q0-6 4.5-6t4.5 6z" fill="#78c058" stroke="#3a8030" stroke-width="0.8"/><circle cx="10.5" cy="6" r="2.8" fill="#8a5a30" stroke="#402010" stroke-width="0.8"/><path d="M8 5q2.5-3 5 0" fill="#201008"/><path d="M5.5 16q0-6 5-6t5 6z" fill="#78b8e8" stroke="#3070a0" stroke-width="0.8"/></svg>
<div class="d" style="left:418px;top:311px;">Administrators (PREDIKTOR\Administrators)</div>
<svg style="left:400px;top:325px;" width="16" height="16" viewBox="0 0 16 16"><circle cx="5" cy="3.5" r="2.8" fill="#f0d0a8" stroke="#a88848" stroke-width="0.8"/><path d="M2.5 2.5q2.5-3 5 0" fill="#e8c060"/><path d="M0.5 13q0-6 4.5-6t4.5 6z" fill="#78c058" stroke="#3a8030" stroke-width="0.8"/><circle cx="10.5" cy="6" r="2.8" fill="#8a5a30" stroke="#402010" stroke-width="0.8"/><path d="M8 5q2.5-3 5 0" fill="#201008"/><path d="M5.5 16q0-6 5-6t5 6z" fill="#78b8e8" stroke="#3070a0" stroke-width="0.8"/></svg>
<div class="d" style="left:418px;top:328px;">Users (PREDIKTOR\Users)</div>
<div style="left:557px;top:364px;width:75px;height:23px;background:#d4d0c8;box-shadow:inset -1px -1px #404040,inset 1px 1px #ffffff,inset -2px -2px #808080;"></div>
<div class="d" style="left:580px;top:369px;">Add...</div>
<div style="left:638px;top:364px;width:75px;height:23px;background:#d4d0c8;box-shadow:inset -1px -1px #404040,inset 1px 1px #ffffff,inset -2px -2px #808080;"></div>
<div class="d" style="left:655px;top:369px;">Remove</div>
<div class="d" style="left:394px;top:401px;letter-spacing:-0.4px">Permissions for Apis1</div>
<div class="d" style="left:596px;top:401px;">Allow</div>
<div class="d" style="left:658px;top:401px;">Deny</div>
<div style="left:394px;top:416px;width:320px;height:99px;background:#fff;border:1px solid #000;box-sizing:border-box"></div>
<div class="d" style="left:406px;top:423px;letter-spacing:-0.4px">Full Control</div>
<div style="left:605px;top:422px;width:13px;height:13px;border:2px solid #000;box-sizing:border-box;background:#fff"></div>
<svg style="left:608px;top:425px;" width="7" height="7" viewBox="0 0 7 7" shape-rendering="crispEdges"><path d="M0 2h1v1h1v1h1V3h1V2h1V1h1V0h1v3H6v1H5v1H4v1H3v1H2V6H1V5H0z" fill="#000"/></svg>
<div style="left:665px;top:422px;width:13px;height:13px;border:2px solid #000;box-sizing:border-box;background:#fff"></div>
<div class="d" style="left:406px;top:441px;letter-spacing:-0.4px">Read</div>
<div style="left:605px;top:440px;width:13px;height:13px;border:2px solid #000;box-sizing:border-box;background:#fff"></div>
<svg style="left:608px;top:443px;" width="7" height="7" viewBox="0 0 7 7" shape-rendering="crispEdges"><path d="M0 2h1v1h1v1h1V3h1V2h1V1h1V0h1v3H6v1H5v1H4v1H3v1H2V6H1V5H0z" fill="#000"/></svg>
<div style="left:665px;top:440px;width:13px;height:13px;border:2px solid #000;box-sizing:border-box;background:#fff"></div>
<div class="d" style="left:406px;top:459px;letter-spacing:-0.4px">Special permissions</div>
<div style="left:605px;top:458px;width:13px;height:13px;border:2px solid #000;box-sizing:border-box;background:#d4d0c8"></div>
<div style="left:665px;top:458px;width:13px;height:13px;border:2px solid #000;box-sizing:border-box;background:#d4d0c8"></div>
<div class="d" style="left:394px;top:523px;letter-spacing:-0.2px">For special permissions or advanced settings,</div>
<div class="d" style="left:394px;top:536px;">click Advanced.</div>
<div style="left:623px;top:522px;width:91px;height:23px;background:#d4d0c8;box-shadow:inset -1px -1px #404040,inset 1px 1px #ffffff,inset -2px -2px #808080;"></div>
<div class="d" style="left:647px;top:527px;">Advanced</div>
<div class="d" style="left:394px;top:564px;color:#000080;letter-spacing:-0.2px"><u>Learn about access control and permissions</u></div>
<div style="left:491px;top:590px;width:75px;height:23px;border:1px solid #000;box-sizing:border-box;background:#d4d0c8;box-shadow:inset -1px -1px #404040,inset 1px 1px #fff,inset -2px -2px #808080"></div>
<div class="d" style="left:521px;top:594px;">OK</div>
<div style="left:572px;top:590px;width:75px;height:23px;background:#d4d0c8;box-shadow:inset -1px -1px #404040,inset 1px 1px #ffffff,inset -2px -2px #808080;"></div>
<div class="d" style="left:591px;top:594px;">Cancel</div>
<div style="left:653px;top:590px;width:75px;height:23px;background:#d4d0c8;box-shadow:inset -1px -1px #404040,inset 1px 1px #ffffff,inset -2px -2px #808080;"></div>
<div class="d" style="left:676px;top:594px;color:#808080;text-shadow:1px 1px #fff">Apply</div>
</body></html>
